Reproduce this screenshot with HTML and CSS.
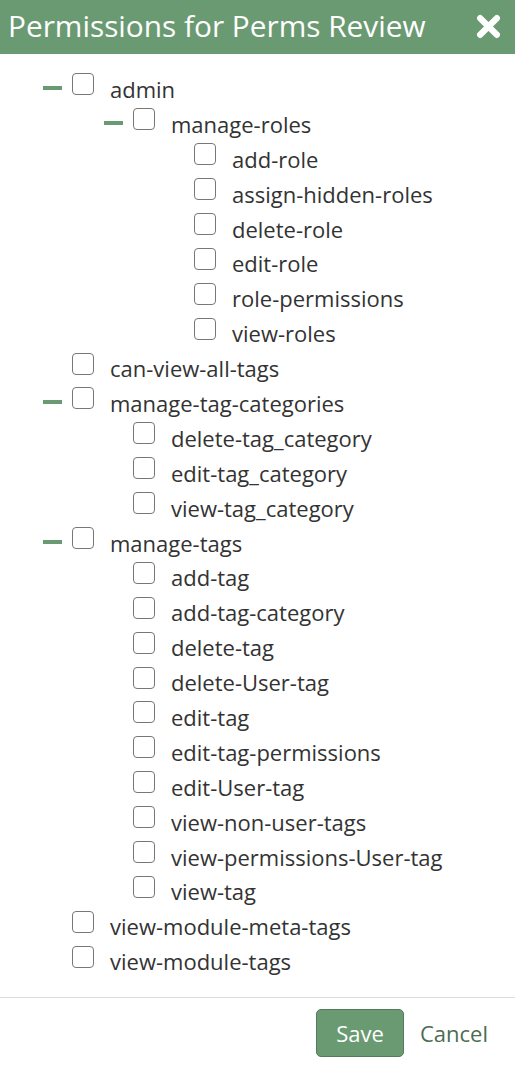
FILE: index.html
```html
<!DOCTYPE html>
<html lang="en">
<head>
<meta charset="utf-8">
<title>Permissions for Perms Review</title>
<link rel="stylesheet" href="styles.css">
</head>
<body>
<div class="dialog">
  <header class="dialog-header">
    <h1 class="dialog-title">Permissions for Perms Review</h1>
    <button class="close-btn" aria-label="Close">
      <svg viewBox="0 0 24 24" width="25" height="25"><path d="M4 4 L20 20 M20 4 L4 20" stroke="#fff" stroke-width="6" stroke-linecap="round"/></svg>
    </button>
  </header>
  <div class="tree">
    <div class="row l0"><span class="toggle"></span><span class="cb"></span><span class="label">admin</span></div>
    <div class="row l1"><span class="toggle"></span><span class="cb"></span><span class="label">manage-roles</span></div>
    <div class="row l2"><span class="spacer"></span><span class="cb"></span><span class="label">add-role</span></div>
    <div class="row l2"><span class="spacer"></span><span class="cb"></span><span class="label">assign-hidden-roles</span></div>
    <div class="row l2"><span class="spacer"></span><span class="cb"></span><span class="label">delete-role</span></div>
    <div class="row l2"><span class="spacer"></span><span class="cb"></span><span class="label">edit-role</span></div>
    <div class="row l2"><span class="spacer"></span><span class="cb"></span><span class="label">role-permissions</span></div>
    <div class="row l2"><span class="spacer"></span><span class="cb"></span><span class="label">view-roles</span></div>
    <div class="row l0"><span class="spacer"></span><span class="cb"></span><span class="label">can-view-all-tags</span></div>
    <div class="row l0"><span class="toggle"></span><span class="cb"></span><span class="label">manage-tag-categories</span></div>
    <div class="row l1"><span class="spacer"></span><span class="cb"></span><span class="label">delete-tag_category</span></div>
    <div class="row l1"><span class="spacer"></span><span class="cb"></span><span class="label">edit-tag_category</span></div>
    <div class="row l1"><span class="spacer"></span><span class="cb"></span><span class="label">view-tag_category</span></div>
    <div class="row l0"><span class="toggle"></span><span class="cb"></span><span class="label">manage-tags</span></div>
    <div class="row l1"><span class="spacer"></span><span class="cb"></span><span class="label">add-tag</span></div>
    <div class="row l1"><span class="spacer"></span><span class="cb"></span><span class="label">add-tag-category</span></div>
    <div class="row l1"><span class="spacer"></span><span class="cb"></span><span class="label">delete-tag</span></div>
    <div class="row l1"><span class="spacer"></span><span class="cb"></span><span class="label">delete-User-tag</span></div>
    <div class="row l1"><span class="spacer"></span><span class="cb"></span><span class="label">edit-tag</span></div>
    <div class="row l1"><span class="spacer"></span><span class="cb"></span><span class="label">edit-tag-permissions</span></div>
    <div class="row l1"><span class="spacer"></span><span class="cb"></span><span class="label">edit-User-tag</span></div>
    <div class="row l1"><span class="spacer"></span><span class="cb"></span><span class="label">view-non-user-tags</span></div>
    <div class="row l1"><span class="spacer"></span><span class="cb"></span><span class="label">view-permissions-User-tag</span></div>
    <div class="row l1"><span class="spacer"></span><span class="cb"></span><span class="label">view-tag</span></div>
    <div class="row l0"><span class="spacer"></span><span class="cb"></span><span class="label">view-module-meta-tags</span></div>
    <div class="row l0"><span class="spacer"></span><span class="cb"></span><span class="label">view-module-tags</span></div>
  </div>
  <footer class="dialog-footer">
    <button class="btn-save">Save</button>
    <button class="btn-cancel">Cancel</button>
  </footer>
</div>
</body>
</html>
```
FILE: styles.css
```css
* { box-sizing: border-box; }
body {
  margin: 0;
  background: #fff;
  font-family: "Open Sans", Lato, sans-serif;
  color: #333;
}
.dialog {
  width: 515px;
}
.dialog-header {
  height: 54px;
  background: #6a9a72;
  display: flex;
  align-items: center;
  justify-content: space-between;
  padding: 0 14px 4px 8px;
}
.dialog-title {
  margin: 0;
  font-size: 29.8px;
  font-weight: 400;
  color: #fff;
}
.close-btn {
  background: none;
  border: 0;
  padding: 0;
  width: 25px;
  height: 25px;
  display: flex;
  margin-top: 2px;
}
.tree {
  padding: 14px 0 22px 43px;
}
.row {
  height: 34.9px;
  display: flex;
  align-items: center;
}
.row.l1 { padding-left: 61px; }
.row.l2 { padding-left: 122px; }
.toggle, .spacer {
  width: 19px;
  margin-right: 10px;
  flex: none;
}
.toggle {
  height: 4px;
  background: #6a9a72;
  margin-top: 6px;
}
.cb {
  width: 22px;
  height: 22px;
  border: 1.5px solid #777;
  border-radius: 4px;
  flex: none;
  margin-top: -2px;
}
.label {
  margin-left: 16px;
  font-size: 22px;
  color: #333;
  margin-top: 7px;
}
.dialog-footer {
  border-top: 1px solid #ddd;
  padding: 11px 27px 0 0;
  display: flex;
  justify-content: flex-end;
  align-items: center;
  gap: 16px;
}
.btn-save {
  width: 88px;
  height: 48px;
  background: #6a9a72;
  border: 1px solid #56785c;
  border-radius: 5px;
  color: #fff;
  font-family: "Open Sans", sans-serif;
  font-size: 22px;
}
.btn-cancel {
  background: none;
  border: 0;
  padding: 0;
  color: #4d6b52;
  font-family: "Open Sans", sans-serif;
  font-size: 22px;
}
```
